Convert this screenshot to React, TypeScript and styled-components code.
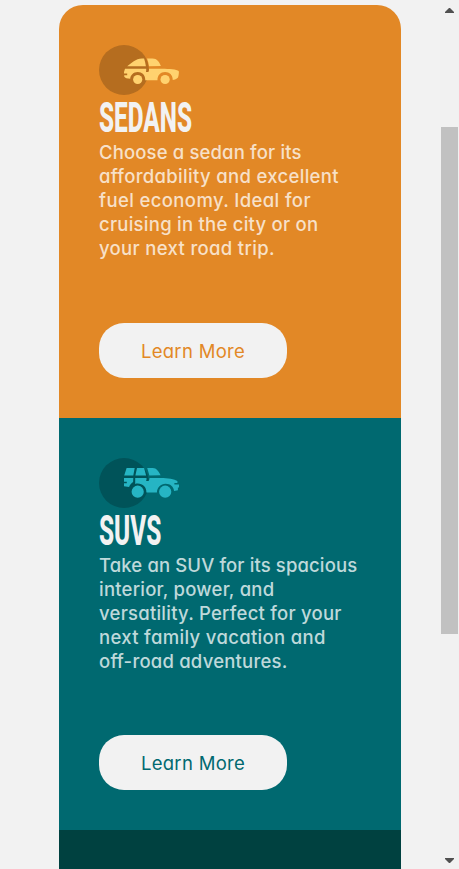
import React from "react";
import styled, { createGlobalStyle } from "styled-components";

const GlobalStyle = createGlobalStyle`
  * { box-sizing: border-box; }
  html, body { margin: 0; height: 100%; overflow: hidden; background: #f2f2f2; }
  #root { height: 100%; }
`;

const Viewport = styled.div`
  display: flex;
  height: 869px;
  overflow: hidden;
  background: #f2f2f2;
`;

const Content = styled.main`
  flex: 1;
  padding: 5px 39px 0 59px;
`;

const Card = styled.section<{ $bg: string; $height: number }>`
  display: flex;
  flex-direction: column;
  align-items: flex-start;
  width: 342px;
  height: ${(p) => p.$height}px;
  padding: 40px 40px 0;
  background: ${(p) => p.$bg};
  &:first-child { border-radius: 24px 24px 0 0; }
`;

const Icon = styled.svg`
  display: block;
  width: 80px;
  height: 50px;
  flex: none;
`;

const Title = styled.h2`
  margin: 2px 0 3px;
  height: 40px;
  font: 800 43px/40px Roboto, sans-serif;
  color: #f2f2f2;
  white-space: nowrap;
  transform: scaleX(0.566);
  transform-origin: left;
`;

const Copy = styled.p`
  margin: 0;
  height: 120px;
  color: rgba(255, 255, 255, 0.75);
`;

const Line = styled.span<{ $track: number }>`
  display: block;
  font: 450 18.5px/24px Inter, sans-serif;
  font-feature-settings: "cv11";
  letter-spacing: ${(p) => p.$track}px;
  white-space: nowrap;
`;

const Button = styled.button<{ $color: string }>`
  width: 188px;
  height: 55px;
  margin: auto 0 40px;
  padding: 1px 0 0;
  border: 0;
  border-radius: 25px;
  background: #f2f2f2;
  color: ${(p) => p.$color};
  font: 400 18.5px/54px Inter, sans-serif;
  font-feature-settings: "cv11";
  letter-spacing: 0.3px;
`;

const Scrollbar = styled.div`
  display: flex;
  flex: none;
  flex-direction: column;
  align-items: center;
  width: 19px;
  padding: 8px 1px 5px;
  background: #f1f1f1;
`;

const Arrow = styled.svg`
  display: block;
  width: 9px;
  height: 5px;
  fill: #505050;
`;

const Thumb = styled.div`
  width: 17px;
  height: 507px;
  margin: 114px 0 224px;
  background: #c1c1c1;
`;

const SedanIcon = () => (
  <Icon viewBox="0 0 80 50">
    <circle cx="25" cy="25" r="25" fill="#b56d1f" />
    <g fill="#ffd26f">
      <path d="M28.2 21.3C32.5 18 36.5 13.4 43 13.4h2.1c.8 2.5 1.4 5.1 1.8 7.9z" />
      <path d="M48 13.4h5.5c4.5 0 6.7 3.3 8.4 7.5l-11.9.4c-.4-2.8-1-5.4-2-7.9z" />
      <path d="M26 23.8h21.2c.1 1.1 0 2.3-.3 3.3h2.5c.6-1.1.7-2.2.6-3.3h12.7c8 0 14.8.7 17 2.3.5 1.6-.1 3.2-.2 4.6-.2 2.5-2.2 3.7-5.8 4.2.2-4.8-3.1-8-7.6-8-4.7 0-7.9 3.6-7.6 8.4H46.2c.4-4.9-2.9-8.4-7.5-8.4-4.1 0-7.1 2.8-7.5 6.8-3-.3-5.2-.7-6-2.3v-1.2h3v-1.7h-3.2v-1.6z" />
      <circle cx="38.7" cy="34.5" r="4.6" />
      <circle cx="66.1" cy="34.5" r="4.6" />
    </g>
  </Icon>
);

const SuvIcon = () => (
  <Icon viewBox="0 0 80 50">
    <circle cx="25" cy="25" r="25" fill="#005359" />
    <g fill="#26b5c4">
      <path d="M27.6 10h8.1l-1.4 7.4h-9.1zM38 10h7.1l2 7.4H36.4zM48.2 10h5.6c3.7 0 5.8 3.3 7.8 7.2l-11.2.2z" />
      <path d="M25 20h9.3l-.2 4c-1.8 1.1-3.4 2.9-4 5.1L25 28.3v-3h2.8v-1.5H25zM36.2 20h11.3c.2 1.1 0 2.2-.4 3.1h2.5c.6-1 .9-2 .9-3.1h11.3c6.7 0 13.9 1.2 16.6 3.1v1.8h-3v1.7H80v2.8l-1.1.2v2.6l-3.8.8c-.5-4.4-3.9-7.2-8.5-7.2-5 0-8.4 3.5-8.7 8.7H47.4c.1-5.4-3.5-8.9-8.7-8.9-.9 0-1.7.1-2.5.3z" />
      <circle cx="38.7" cy="33.7" r="6.1" />
      <circle cx="66.2" cy="33.7" r="6.1" />
    </g>
  </Icon>
);

type Row = [text: string, track: number];

const sedanCopy: Row[] = [
  ["Choose a sedan for its", 0.14],
  ["affordability and excellent", 0.32],
  ["fuel economy. Ideal for", 0.38],
  ["cruising in the city or on", 0.25],
  ["your next road trip.", 0.33],
];

const suvCopy: Row[] = [
  ["Take an SUV for its spacious", 0.12],
  ["interior, power, and", 0.22],
  ["versatility. Perfect for your", 0.24],
  ["next family vacation and", 0.33],
  ["off-road adventures.", 0.21],
];

const Lines = ({ rows }: { rows: Row[] }) => (
  <Copy>
    {rows.map(([text, track]) => (
      <Line key={text} $track={track}>{text}</Line>
    ))}
  </Copy>
);

export default function App() {
  return (
    <>
      <GlobalStyle />
      <Viewport>
        <Content>
          <Card $bg="#e28826" $height={413}>
            <SedanIcon />
            <Title>SEDANS</Title>
            <Lines rows={sedanCopy} />
            <Button $color="#e28826">Learn More</Button>
          </Card>
          <Card $bg="#006970" $height={412}>
            <SuvIcon />
            <Title>SUVS</Title>
            <Lines rows={suvCopy} />
            <Button $color="#006970">Learn More</Button>
          </Card>
          <Card $bg="#004140" $height={413} />
        </Content>
        <Scrollbar>
          <Arrow viewBox="0 0 9 5"><path d="M4 0h1l4 4v1H0V4z" /></Arrow>
          <Thumb />
          <Arrow viewBox="0 0 9 5"><path d="M0 0h9v1L5 5H4L0 1z" /></Arrow>
        </Scrollbar>
      </Viewport>
    </>
  );
}
